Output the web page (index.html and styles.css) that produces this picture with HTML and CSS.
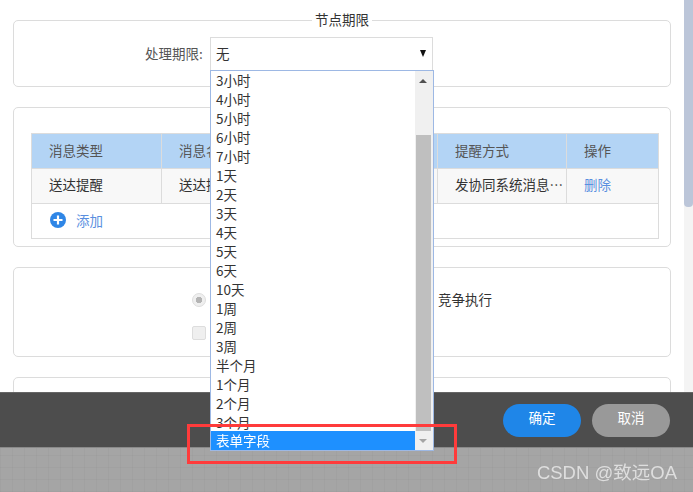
FILE: index.html
```html
<!DOCTYPE html>
<html lang="zh">
<head>
<meta charset="utf-8">
<title>节点期限</title>
<link rel="stylesheet" href="styles.css">
</head>
<body>
<div class="dialog">
  <div class="main">
    <div class="content">
      <section class="panel panel-deadline">
        <span class="legend">节点期限</span>
        <div class="field">
          <span class="field-label">处理期限:</span>
          <div class="select"><span>无</span><i class="caret"></i></div>
        </div>
      </section>
      <section class="panel panel-table">
        <div class="table">
          <div class="row head">
            <div class="cell c1">消息类型</div>
            <div class="cell c2">消息名称</div>
            <div class="cell c3">提醒方式</div>
            <div class="cell c4">操作</div>
          </div>
          <div class="row body-row">
            <div class="cell c1">送达提醒</div>
            <div class="cell c2">送达提醒</div>
            <div class="cell c3">发协同系统消息…</div>
            <div class="cell c4 link">删除</div>
          </div>
          <div class="add">
            <svg class="add-icon" width="16" height="16" viewBox="0 0 16 16"><circle cx="8" cy="8" r="8" fill="#2f86e6"/><path d="M3.5 8h9M8 3.500v9" stroke="#fff" stroke-width="2.200"/></svg>
            <span class="link">添加</span>
          </div>
        </div>
      </section>
      <section class="panel panel-mode">
        <div class="mode-row"><i class="radio"></i><span class="mode-text">竞争执行</span></div>
        <div class="mode-row"><i class="check"></i></div>
      </section>
      <section class="panel panel-last"></section>
    </div>
    <div class="scrollbar"><div class="scroll-thumb"></div></div>
  </div>
  <footer class="footer">
    <button class="btn primary">确定</button>
    <button class="btn muted">取消</button>
  </footer>
</div>
<div class="backdrop"></div>

<div class="dropdown">
  <div class="list">
    <div class="items">
      <div class="item">3小时</div>
      <div class="item">4小时</div>
      <div class="item">5小时</div>
      <div class="item">6小时</div>
      <div class="item">7小时</div>
      <div class="item">1天</div>
      <div class="item">2天</div>
      <div class="item">3天</div>
      <div class="item">4天</div>
      <div class="item">5天</div>
      <div class="item">6天</div>
      <div class="item">10天</div>
      <div class="item">1周</div>
      <div class="item">2周</div>
      <div class="item">3周</div>
      <div class="item">半个月</div>
      <div class="item">1个月</div>
      <div class="item">2个月</div>
      <div class="item">3个月</div>
    </div>
    <div class="item selected">表单字段</div>
  </div>
  <div class="dd-scroll">
    <i class="arrow up"></i>
    <div class="dd-thumb"></div>
    <i class="arrow down"></i>
  </div>
</div>
<div class="red-box"></div>
<div class="watermark">CSDN @致远OA</div>
</body>
</html>
```
FILE: styles.css
```css
* { box-sizing: border-box; }
html, body { margin: 0; padding: 0; }
body {
  width: 693px; height: 492px; overflow: hidden; position: relative;
  font: 13.5px/19px "Noto Sans CJK SC", "Liberation Sans", sans-serif;
  color: #333; background: #a5a5a5;
  filter: blur(.35px);
}
.dialog { height: 447px; display: flex; flex-direction: column; }
.main { height: 392px; display: flex; background: #fff; overflow: hidden; }
.content { width: 684px; padding: 20px 0 0 13px; flex: none; }
.scrollbar { width: 9px; background: #f4f4f4; }
.scroll-thumb { height: 207px; background: #bcc6d9; border-radius: 0 0 4px 4px; }

.panel { width: 658px; border: 1px solid #dcdcdc; border-radius: 5px; background: #fff; position: relative; }
.panel-deadline { height: 67px; margin-bottom: 20px; }
.panel-table { height: 140px; margin-bottom: 20px; padding: 25px 11px 0 17px; }
.panel-mode { height: 90px; margin-bottom: 20px; padding: 25px 0 0 178px; }
.panel-last { height: 40px; }

.legend { position: absolute; top: -11px; left: 0; right: 0; margin: 0 auto; width: 60px; text-align: center; background: #fff; color: #333; }
.field { display: flex; align-items: flex-start; padding-top: 16px; padding-left: 130px; }
.field-label { width: 66px; height: 33px; line-height: 33px; padding-left: 1px; color: #555; white-space: nowrap; }
.select { width: 223px; height: 33px; border: 1px solid #dcdcdc; border-bottom: 0; display: flex; align-items: center; justify-content: space-between; padding: 0 6px 2px 5px; color: #333; background: #fff; }
.caret { width: 0; height: 0; border-left: 3.500px solid transparent; border-right: 3.500px solid transparent; border-top: 7px solid #111; margin-top: 1px; }

.table { border: 1px solid #dcdcdc; height: 106px; }
.row { display: flex; height: 35px; border-bottom: 1px solid #dcdcdc; }
.head { background: #b3d4f5; color: #555; }
.head .cell { line-height: 32px; }
.body-row { background: #f8f8f8; }
.cell { padding-left: 17px; line-height: 30px; border-right: 1px solid #dcdcdc; white-space: nowrap; overflow: hidden; flex: none; }
.c1 { width: 130px; }
.c2 { width: 276px; }
.c3 { width: 129px; }
.c4 { flex: 1; border-right: 0; }
.link { color: #5a8fe0; }
.add { display: flex; align-items: center; gap: 10px; padding: 0 0 2px 18px; height: 34px; }
.add-icon { flex: none; }

.mode-row { display: flex; height: 33px; align-items: flex-start; position: relative; }
.radio { width: 14px; height: 14px; border-radius: 50%; border: 1px solid #ddd; background: radial-gradient(circle, #b4b4b4 0 3px, #efefef 3.500px); }
.check { width: 14px; height: 14px; border-radius: 2px; border: 1px solid #ddd; background: #efefef; }
.mode-text { position: absolute; left: 246px; top: -3px; }

.footer { height: 55px; background: #4d4d4d; border-top: 1px solid #666; display: flex; justify-content: flex-end; align-items: center; gap: 11px; padding: 0 23px 0 0; }
.btn { width: 78px; height: 33px; border: 0; border-radius: 17px; font: inherit; color: #fff; padding: 0 0 6px; }
.primary { background: #1f86e8; }
.muted { background: #999; }
.backdrop {
  height: 45px; border-top: 1px solid #8a8a8a;
  background-color: #a5a5a5;
  background-image:
    repeating-linear-gradient(90deg, rgba(0,0,0,.025) 0 1px, transparent 1px 12px),
    repeating-linear-gradient(0deg, rgba(0,0,0,.025) 0 1px, transparent 1px 12px);
}

.dropdown { position: absolute; left: 210px; top: 70px; width: 224px; height: 381px; display: flex; background: #fff; border: 1px solid #9db8e4; }
.list { width: 204px; flex: none; display: flex; flex-direction: column; justify-content: space-between; overflow: hidden; }
.items { height: 360px; overflow: hidden; }
.item { height: 19px; line-height: 19px; padding-left: 5px; color: #333; white-space: nowrap; }
.selected { background: #1e90ff; color: #fff; }
.dd-scroll { flex: 1; background: #f0f0f0; position: relative; }
.dd-thumb { position: absolute; left: 1px; top: 64px; width: 15px; height: 296px; background: #bfbfbf; }
.arrow { position: absolute; left: 4px; width: 0; height: 0; border-left: 4px solid transparent; border-right: 4px solid transparent; }
.up { top: 8px; border-bottom: 4px solid #505050; }
.down { bottom: 7px; border-top: 4px solid #a5a5a5; }
.red-box { position: absolute; left: 187px; top: 424px; width: 270px; height: 40px; border: 3px solid #ff3b3b; }
.watermark { position: absolute; right: 16px; top: 461px; font-family: "Liberation Sans", "Noto Sans CJK SC", sans-serif; font-size: 18.500px; line-height: 24px; color: #dedede; white-space: nowrap; }
```
